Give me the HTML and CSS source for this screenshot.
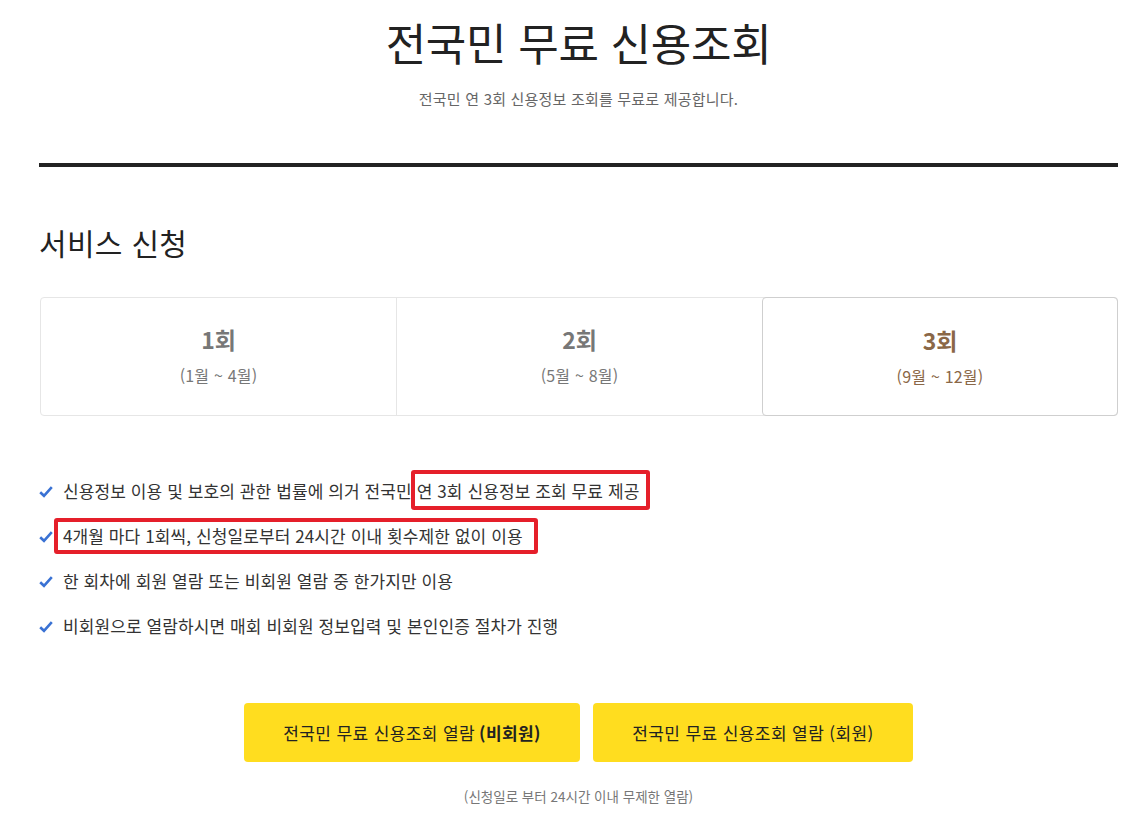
FILE: index.html
```html
<!DOCTYPE html>
<html lang="ko">
<head>
    <meta charset="utf-8">
    <title>전국민 무료 신용조회</title>
    <link rel="stylesheet" href="styles.css">
</head>
<body>
    <div class="page">
        <header class="page-head">
            <h1 class="page-title">전국민 무료 신용조회</h1>
            <p class="page-desc">전국민 연 3회 신용정보 조회를 무료로 제공합니다.</p>
        </header>

        <section class="service">
            <h2 class="service-title">서비스 신청</h2>

            <div class="rounds">
                <div class="round">
                    <strong class="round-no">1회</strong>
                    <span class="round-term">(1월 ~ 4월)</span>
                </div>
                <div class="round">
                    <strong class="round-no">2회</strong>
                    <span class="round-term">(5월 ~ 8월)</span>
                </div>
                <div class="round active">
                    <strong class="round-no">3회</strong>
                    <span class="round-term">(9월 ~ 12월)</span>
                </div>
            </div>

            <ul class="notice">
                <li>
                    <svg class="check" viewBox="0 0 14 12"><path d="M1.2 6.2 L5 9.8 L12.8 1.2"/></svg>
                    <span>신용정보 이용 및 보호의 관한 법률에 의거 전국민 <span class="mark mark-a">연 3회 신용정보 조회 무료 제공</span></span>
                </li>
                <li>
                    <svg class="check" viewBox="0 0 14 12"><path d="M1.2 6.2 L5 9.8 L12.8 1.2"/></svg>
                    <span class="mark mark-b">4개월 마다 1회씩, 신청일로부터 24시간 이내 횟수제한 없이 이용</span>
                </li>
                <li>
                    <svg class="check" viewBox="0 0 14 12"><path d="M1.2 6.2 L5 9.8 L12.8 1.2"/></svg>
                    <span>한 회차에 회원 열람 또는 비회원 열람 중 한가지만 이용</span>
                </li>
                <li>
                    <svg class="check" viewBox="0 0 14 12"><path d="M1.2 6.2 L5 9.8 L12.8 1.2"/></svg>
                    <span>비회원으로 열람하시면 매회 비회원 정보입력 및 본인인증 절차가 진행</span>
                </li>
            </ul>

            <div class="actions">
                <a class="btn btn-guest" href="#">전국민 무료 신용조회 열람 <b>(비회원)</b></a>
                <a class="btn btn-member" href="#">전국민 무료 신용조회 열람 (회원)</a>
            </div>
            <p class="actions-note">(신청일로 부터 24시간 이내 무제한 열람)</p>
        </section>
    </div>
</body>
</html>
```

FILE: styles.css
```css
body {
    margin: 0;
    background: #fff;
    color: #222;
    font-family: "Noto Sans CJK KR", "Noto Sans", sans-serif;
}

.page {
    margin: 0 25px 0 39px;
}

.page-head {
    text-align: center;
    padding-top: 15px;
    padding-bottom: 54px;
    border-bottom: 4px solid #222;
}

.page-title {
    margin: 0;
    font-size: 44px;
    line-height: 54px;
    font-weight: 400;
    letter-spacing: -0.3px;
}

.page-desc {
    margin: 20px 0 0;
    font-size: 15px;
    line-height: 20px;
    color: #666;
    letter-spacing: 0.2px;
}

.service-title {
    margin: 55px 0 35px;
    font-size: 30px;
    line-height: 40px;
    font-weight: 400;
    letter-spacing: 0.3px;
}

/* 회차 선택 */
.rounds {
    display: grid;
    grid-template-columns: 355px 1fr 355px;
    height: 119px;
    margin-left: 1px;
    border: 1px solid #e6e6e6;
    border-radius: 4px;
    box-sizing: border-box;
}

.round {
    display: flex;
    flex-direction: column;
    align-items: center;
    padding-top: 26px;
    color: #777;
}

.round + .round {
    border-left: 1px solid #e6e6e6;
}

.round.active {
    margin: -1px -1px -1px 0;
    border: 1px solid #cfcfcf;
    border-radius: 4px;
    padding-top: 27px;
    color: #8a6747;
}

.round-no {
    font-size: 23px;
    line-height: 30px;
    font-weight: 700;
}

.round-term {
    margin-top: 10px;
    font-size: 16px;
    line-height: 22px;
    letter-spacing: 0.2px;
}

/* 안내 문구 */
.notice {
    list-style: none;
    margin: 52px 0 0;
    padding: 0;
}

.notice li {
    display: flex;
    align-items: center;
    gap: 10px;
    padding: 10px 0;
    line-height: 25px;
    font-size: 17px;
    color: #333;
    letter-spacing: 0.1px;
}

.check {
    width: 14px;
    height: 12px;
    margin-top: 3px;
    flex: none;
}

.check path {
    fill: none;
    stroke: #3a72d4;
    stroke-width: 2.6;
}

.mark {
    position: relative;
}

.mark::after {
    content: '';
    position: absolute;
    border: 4px solid #e51f2a;
    border-radius: 3px;
}

.mark-a::after {
    inset: -8px -11px -7px -6px;
}

.mark-b::after {
    inset: -5px -15px -6px -9px;
}

/* 버튼 */
.actions {
    display: flex;
    justify-content: center;
    gap: 13px;
    margin-top: 55px;
}

.btn {
    display: flex;
    align-items: center;
    justify-content: center;
    height: 59px;
    border-radius: 4px;
    background: #ffdd1f;
    color: #222;
    font-size: 17px;
    text-decoration: none;
    letter-spacing: 0.4px;
}

.btn b {
    margin-left: 4px;
    font-weight: 700;
}

.btn-guest {
    width: 336px;
}

.btn-member {
    width: 320px;
}

.actions-note {
    margin: 24px 0 0;
    text-align: center;
    font-size: 13.5px;
    line-height: 20px;
    color: #777;
}
```
